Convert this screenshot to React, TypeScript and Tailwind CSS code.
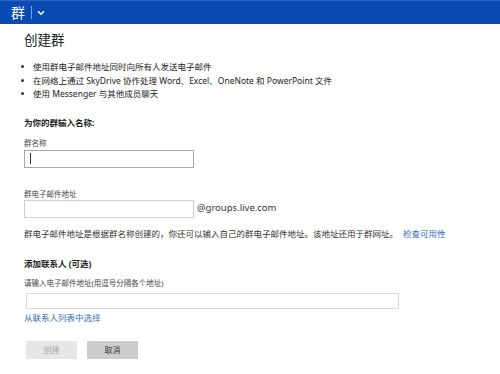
import React from 'react';

const font = { fontFamily: '"Noto Sans", "Noto Sans CJK SC", sans-serif' };

const bullets = [
  '使用群电子邮件地址同时向所有人发送电子邮件',
  '在网络上通过 SkyDrive 协作处理 Word、Excel、OneNote 和 PowerPoint 文件',
  '使用 Messenger 与其他成员聊天',
];

export default function App() {
  return (
    <div className="w-[500px] h-[374px] bg-white text-[#333] overflow-hidden" style={font}>
      {/* top bar */}
      <div className="h-[24px] bg-[#0a4ab3] border-t border-[#2d63c2] flex items-center pl-[11px] text-white">
        <span className="text-[14px] leading-none">群</span>
        <span className="ml-[6px] h-[13px] w-px bg-[#7d9fd9]" />
        <svg className="ml-[5px]" width="8" height="6" viewBox="0 0 8 6" fill="none">
          <path d="M1 1.2 L4 4.2 L7 1.2" stroke="white" strokeWidth="1.6" />
        </svg>
      </div>

      <div className="pl-[24px]">
        <h1 className="mt-[8px] text-[13.5px] leading-[16px] font-normal text-[#222]">创建群</h1>

        <ul className="mt-[12px]">
          {bullets.map((b) => (
            <li key={b} className="flex items-center text-[8.5px] leading-[13.5px] text-[#222]">
              <span className="ml-[-3px] w-[3px] h-[3px] rounded-full bg-[#333]" />
              <span className="ml-[9px]">{b}</span>
            </li>
          ))}
        </ul>

        <div className="mt-[16px] text-[8.5px] leading-[12px] font-bold text-[#222]">为你的群输入名称:</div>

        <div className="mt-[9px] text-[7.5px] leading-[10px] text-[#444]">群名称</div>
        <div className="mt-[2px] w-[170px] h-[18px] border border-[#a8a8a8] flex items-center pl-[5px]">
          <span className="w-px h-[11px] bg-[#333]" />
        </div>

        <div className="mt-[21px] text-[7.5px] leading-[10px] text-[#444]">群电子邮件地址</div>
        <div className="mt-[1px] flex items-center">
          <div className="w-[170px] h-[18px] border border-[#cfcfcf]" />
          <span className="ml-[3px] text-[9.5px] text-[#333]">@groups.live.com</span>
        </div>

        <div className="mt-[10px] text-[8.5px] leading-[12px] text-[#333] whitespace-nowrap">
          群电子邮件地址是根据群名称创建的，你还可以输入自己的群电子邮件地址。该地址还用于群网址。
          <span className="ml-[5px] text-[#2b6cc0]">检查可用性</span>
        </div>

        <div className="mt-[18px] text-[8.5px] leading-[12px] font-bold text-[#222]">添加联系人 (可选)</div>

        <div className="mt-[8px] text-[7.5px] leading-[10px] text-[#444]">请输入电子邮件地址(用逗号分隔各个地址)</div>
        <div className="mt-[5px] ml-[2px] w-[373px] h-[16px] border border-[#dadada]" />

        <div className="mt-[3px] text-[8.5px] leading-[12px] text-[#2b6cc0]">从联系人列表中选择</div>

        <div className="mt-[17px] ml-[2px] flex gap-[10px]">
          <button className="w-[51px] h-[18px] bg-[#e6e6e6] text-[8px] text-[#a8a8a8]">创建</button>
          <button className="w-[51px] h-[18px] bg-[#cccccc] text-[8px] text-[#333]">取消</button>
        </div>
      </div>
    </div>
  );
}
